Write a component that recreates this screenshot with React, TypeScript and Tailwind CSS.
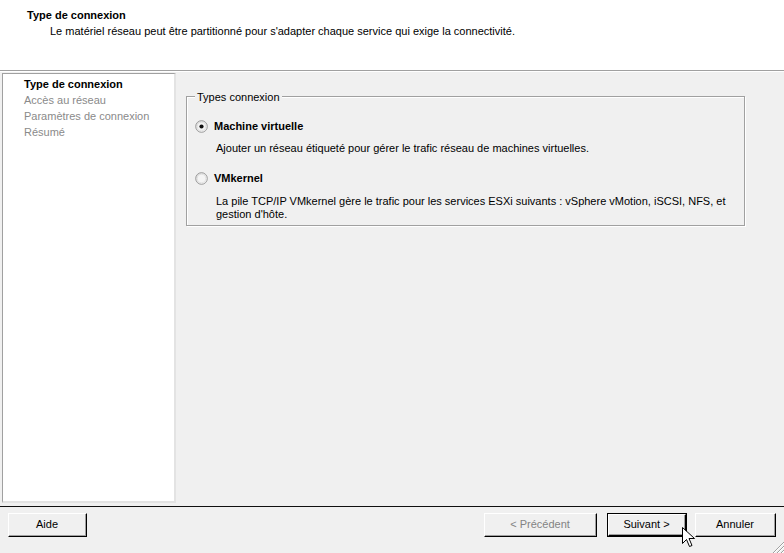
import React from "react";

function Radio({ checked }: { checked: boolean }) {
  return (
    <svg width="13" height="13" viewBox="0 0 13 13" className="shrink-0">
      <defs>
        <linearGradient id={checked ? "rg1" : "rg2"} x1="0" y1="0" x2="1" y2="1">
          <stop offset="0" stopColor="#dcdcdc" />
          <stop offset="1" stopColor="#ffffff" />
        </linearGradient>
      </defs>
      <circle cx="6.5" cy="6.5" r="5.8" fill={`url(#${checked ? "rg1" : "rg2"})`} stroke="#8e8f8f" strokeWidth="0.9" />
      <circle cx="6.5" cy="6.5" r="4.3" fill="#f4f4f4" stroke="#d6d6d6" strokeWidth="0.6" />
      {checked && <circle cx="6.5" cy="6.5" r="2.1" fill="#111" />}
    </svg>
  );
}

function Btn({ label, disabled, isDefault, w }: { label: string; disabled?: boolean; isDefault?: boolean; w: string }) {
  return (
    <div className={`${w} h-[24px] ${isDefault ? "border border-black" : ""} flex`}>
      <div className="flex-1 border-t border-l border-t-white border-l-white border-r border-b border-r-black border-b-black flex">
        <div className="flex-1 border-r border-b border-r-[#a0a0a0] border-b-[#a0a0a0] bg-[#f0f0f0] flex items-center justify-center">
          <span className={disabled ? "text-[#838383]" : "text-black"}>{label}</span>
        </div>
      </div>
    </div>
  );
}

export default function App() {
  return (
    <div
      className="relative w-[784px] h-[553px] bg-[#f0f0f0] flex flex-col overflow-hidden text-[11px] leading-[13px] text-black"
      style={{ fontFamily: '"Liberation Sans", Arial, sans-serif' }}
    >
      {/* Header */}
      <div className="h-[71px] shrink-0 bg-white border-b border-b-[#a0a0a0] flex flex-col">
        <div className="pl-[27px] pt-[9px] font-bold">Type de connexion</div>
        <div className="pl-[50px] pt-[3px]">
          Le matériel réseau peut être partitionné pour s'adapter chaque service qui exige la connectivité.
        </div>
      </div>
      <div className="h-px bg-white shrink-0" />

      {/* Body */}
      <div className="flex-1 flex min-h-0 pt-[1px] pb-[3px]">
        <div className="ml-[2px] w-[174px] bg-white border-t border-l border-t-[#a0a0a0] border-l-[#a0a0a0] border-r-2 border-b-2 border-r-[#e3e3e3] border-b-[#e3e3e3] flex flex-col pl-[21px] pt-[2px] leading-[16px]">
          <div className="font-bold">Type de connexion</div>
          <div className="text-[#8a8a8a]">Accès au réseau</div>
          <div className="text-[#8a8a8a]">Paramètres de connexion</div>
          <div className="text-[#8a8a8a]">Résumé</div>
        </div>

        <div className="flex-1 pl-[10px] pt-[23px] pr-[39px]">
          <div className="relative border border-[#a0a0a0] shadow-[inset_1px_1px_0_#fff,1px_1px_0_#fff] h-[130px] px-[8px] pt-[21px]">
            <div className="absolute left-[8px] top-[-6px] bg-[#f0f0f0] px-[2px] leading-[13px]">Types connexion</div>
            <div className="flex items-center gap-[6px] h-[17px]">
              <Radio checked />
              <span className="font-bold">Machine virtuelle</span>
            </div>
            <div className="pl-[21px] pt-[7px]">
              Ajouter un réseau étiqueté pour gérer le trafic réseau de machines virtuelles.
            </div>
            <div className="flex items-center gap-[6px] h-[17px] mt-[15px]">
              <Radio checked={false} />
              <span className="font-bold">VMkernel</span>
            </div>
            <div className="pl-[21px] pt-[8px]">
              La pile TCP/IP VMkernel gère le trafic pour les services ESXi suivants : vSphere vMotion, iSCSI, NFS, et
              <br />
              gestion d'hôte.
            </div>
          </div>
        </div>
      </div>

      {/* Separator */}
      <div className="h-px bg-[#101010] shrink-0" />

      {/* Footer */}
      <div className="h-[46px] shrink-0 flex items-start pt-[6px] pl-[8px] pr-[8px]">
        <Btn label="Aide" w="w-[79px]" />
        <div className="flex-1" />
        <Btn label="< Précédent" w="w-[113px]" disabled />
        <div className="w-[10px]" />
        <Btn label="Suivant >" w="w-[80px]" isDefault />
        <div className="w-[8px]" />
        <Btn label="Annuler" w="w-[81px]" />
      </div>

      {/* Size grip */}
      <svg className="absolute right-0 bottom-0" width="14" height="14" viewBox="0 0 14 14">
        <g strokeWidth="1">
          <line x1="3" y1="14" x2="14" y2="3" stroke="#a0a0a0" />
          <line x1="4" y1="14" x2="14" y2="4" stroke="#fff" />
          <line x1="7" y1="14" x2="14" y2="7" stroke="#a0a0a0" />
          <line x1="8" y1="14" x2="14" y2="8" stroke="#fff" />
          <line x1="11" y1="14" x2="14" y2="11" stroke="#a0a0a0" />
          <line x1="12" y1="14" x2="14" y2="12" stroke="#fff" />
        </g>
      </svg>

      {/* Mouse cursor */}
      <svg className="absolute left-[682px] top-[527px]" width="13" height="21" viewBox="0 0 13 21">
        <path d="M0.5 0.5 L0.5 16.5 L4.5 12.5 L7.5 19.5 L10 18.5 L7 11.5 L12.5 11.5 Z" fill="#fff" stroke="#000" strokeWidth="1" strokeLinejoin="miter" />
      </svg>
    </div>
  );
}
